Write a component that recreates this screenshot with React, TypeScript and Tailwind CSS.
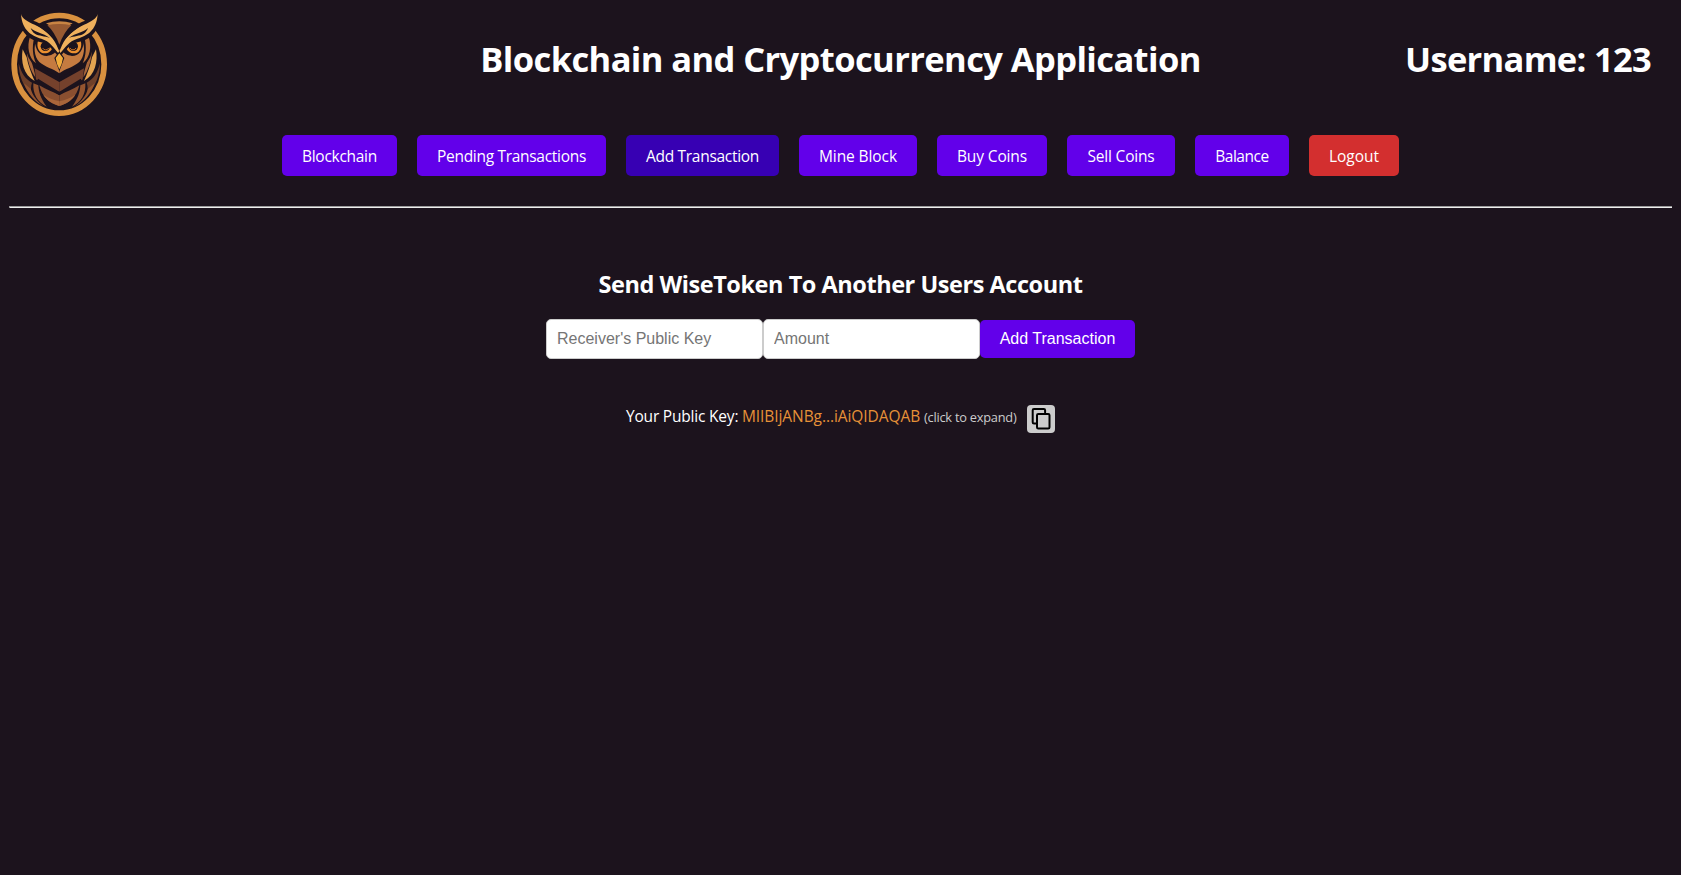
import clsx from 'clsx';

function OwlHalf() {
  return (
    <g>
      <path d="M68 148 C62 185 70 225 104 243 C94 222 84 195 80 172 Z" fill="#e3a350" />
      <path d="M80 150 C82 185 92 212 106 232 C104 212 94 180 80 150Z" fill="#a9673a" />
      <path d="M56 190 C56 225 68 258 96 288 C92 272 92 258 96 248 C76 238 64 220 56 190Z" fill="#6f4029" />
      <path d="M100 250 C98 282 112 306 140 320 C122 296 116 276 115 256Z" fill="#94552f" />
      <path d="M72 250 C82 280 104 306 136 322 C110 304 98 286 92 266Z" fill="#94552f" />
      <path d="M104 205 L178 246 L178 276 C150 264 124 252 108 238 Z" fill="#75412c" />
      <path d="M118 256 C136 268 160 276 178 286 L178 318 C148 310 126 290 118 256Z" fill="#8a4f30" />
      <path d="M130 284 C140 302 160 312 178 318 L178 304 C160 300 144 294 130 284Z" fill="#a9653a" />
      <path d="M84 106 C70 140 80 182 112 202 C136 216 160 222 178 238 L178 150 Z" fill="#1c131d" />
      <path d="M90 110 C80 140 86 172 108 190 C98 166 96 140 102 116Z" fill="#b87038" />
      <path d="M110 118 C100 140 102 170 118 186 C136 202 160 206 178 220 L178 150 L150 128Z" fill="#c57b40" />
      <path d="M104 122 C106 150 120 168 140 168 C156 166 164 160 168 154 L152 126Z" fill="#1c131d" />
      <path d="M114 122 C108 142 118 160 134 160 C146 160 154 152 156 146 L146 128Z" fill="#eb9030" />
      <ellipse cx="136" cy="139" rx="14" ry="14" fill="#1c131d" />
      <path d="M128 144 A10 10 0 0 0 146 144" fill="none" stroke="#c66b20" strokeWidth="3" />
      <path d="M58 34 C70 62 102 56 134 80 C160 98 178 120 178 172 C164 160 152 132 120 126 C88 120 54 98 58 34Z" fill="#1c131d" />
      <path d="M63 42 C66 56 84 66 104 74 C132 86 158 108 170 136 L177 152 L177 162 C160 142 150 124 124 116 C96 108 66 92 63 42Z" fill="#efb05c" />
      <path d="M92 84 C106 98 128 98 150 114 C134 108 116 108 106 102 C98 97 94 90 92 84Z" fill="#1c131d" />
      <path d="M102 70 C144 78 164 104 172 132 C158 112 136 92 102 70Z" fill="#1c131d" />
    </g>
  );
}

function OwlLogo() {
  return (
    <svg className="block h-[125px] w-[120px]" viewBox="0 0 360 375" role="img">
      <ellipse cx="177.500" cy="193" rx="135" ry="146.500" fill="#1c131d" stroke="#d9913f" strokeWidth="17" />
      <OwlHalf />
      <g transform="translate(356 0) scale(-1 1)">
        <OwlHalf />
      </g>
      <path d="M130 70 Q178 52 226 70 L200 94 L178 136 L156 94Z" fill="#1c131d" />
      <path d="M138 70 Q178 58 218 70 L204 78 Q178 70 152 78Z" fill="#c98443" />
      <path d="M142 76 Q178 68 214 76 Q192 96 178 134 Q164 96 142 76Z" fill="#985a32" />
      <path d="M178 154 L193 174 L178 214 L163 174Z" fill="#1c131d" />
      <path d="M178 160 Q184 168 189 174 Q186 194 178 208 Q170 194 167 174 Q172 168 178 160Z" fill="#f2ad3c" />
      <path d="M122 205 L178 240 L234 205 M112 240 L178 280 L244 240" fill="none" stroke="#1c131d" strokeWidth="8" />
    </svg>
  );
}

const navItems = [
  { label: 'Blockchain', look: 'w-[115px] tracking-[-0.28px] bg-[#6200ea]' },
  { label: 'Pending Transactions', look: 'w-[189px] tracking-[-0.3px] bg-[#6200ea]' },
  { label: 'Add Transaction', look: 'w-[153px] tracking-[-0.3px] bg-[#3700b3]' },
  { label: 'Mine Block', look: 'w-[118px] tracking-[-0.1px] bg-[#6200ea]' },
  { label: 'Buy Coins', look: 'w-[110px] tracking-[-0.13px] bg-[#6200ea]' },
  { label: 'Sell Coins', look: 'w-[108px] tracking-[-0.18px] bg-[#6200ea]' },
  { label: 'Balance', look: 'w-[94px] tracking-[-0.45px] bg-[#6200ea]' },
  { label: 'Logout', look: 'w-[90px] bg-[#d32f2f]' },
];

function CopyIcon() {
  return (
    <svg className="h-7 w-7" viewBox="0 0 28 28" fill="none" stroke="#000" strokeWidth="2" strokeLinejoin="round" strokeLinecap="round">
      <path d="M9.500 18.500 H7 Q5.700 18.500 5.700 17.200 V5.300 Q5.700 4 7 4 H16.800 Q18.100 4 18.100 5.300 V7.500" />
      <rect x="10" y="9" width="12.500" height="14.500" rx="1.300" />
    </svg>
  );
}

const inputClass =
  "h-10 w-[217px] rounded-[5px] border border-[#ccc] bg-white px-[10px] text-base text-black outline-none placeholder:text-[#757575] placeholder:opacity-100 font-['Liberation_Sans',Arial,sans-serif]";

export default function App() {
  return (
    <div className="flex min-h-[875px] flex-col bg-[#1c131d] font-['Open_Sans',sans-serif] text-white">
      <header className="grid h-[135px] grid-cols-[1fr_auto_1fr] items-start">
        <OwlLogo />
        <h1 className="mt-[35px] whitespace-nowrap text-[34.5px] leading-[48px] font-bold tracking-[-0.6px]">
          Blockchain and Cryptocurrency Application
        </h1>
        <p className="mt-[35px] mr-[30px] text-right text-[34.5px] leading-[48px] font-bold tracking-[-0.7px]">
          Username: 123
        </p>
      </header>

      <nav className="flex justify-center gap-5">
        {navItems.map(({ label, look }) => (
          <a
            key={label}
            className={clsx('flex h-[41px] items-center justify-center whitespace-nowrap rounded-[5px] pt-[2px] text-[15.5px]', look)}
          >
            {label}
          </a>
        ))}
      </nav>

      <hr className="mx-[9px] mt-[30px] h-[2px] border-0 border-t border-l border-[#9a9a9a] bg-[#eeeeee]" />

      <main className="flex flex-col items-center pt-[60px]">
        <h2 className="text-[23.5px] leading-8 font-bold tracking-[-0.45px]">Send WiseToken To Another Users Account</h2>

        <form className="mt-[19px] flex items-center" onSubmit={(e) => e.preventDefault()}>
          <input className={inputClass} placeholder="Receiver's Public Key" />
          <input className={inputClass} placeholder="Amount" />
          <button className="h-[38px] w-[155px] rounded-[5px] bg-[#6200ea] text-base font-['Liberation_Sans',Arial,sans-serif]">
            Add Transaction
          </button>
        </form>

        <div className="mt-[45px] flex h-7 items-start text-[15.5px] leading-6">
          <span className="w-[116px] whitespace-nowrap tracking-[-0.2px]">Your Public Key:</span>
          <span className="w-[182px] whitespace-nowrap tracking-[-0.08px] text-[#e69138]">MIIBIjANBg...iAiQIDAQAB</span>
          <span className="w-[103px] whitespace-nowrap pt-px text-[12.8px] tracking-[-0.23px] text-[#cccccc]">(click to expand)</span>
          <button className="mt-px h-7 w-7 rounded-[4px] bg-[#cccccc]">
            <CopyIcon />
          </button>
        </div>
      </main>
    </div>
  );
}
